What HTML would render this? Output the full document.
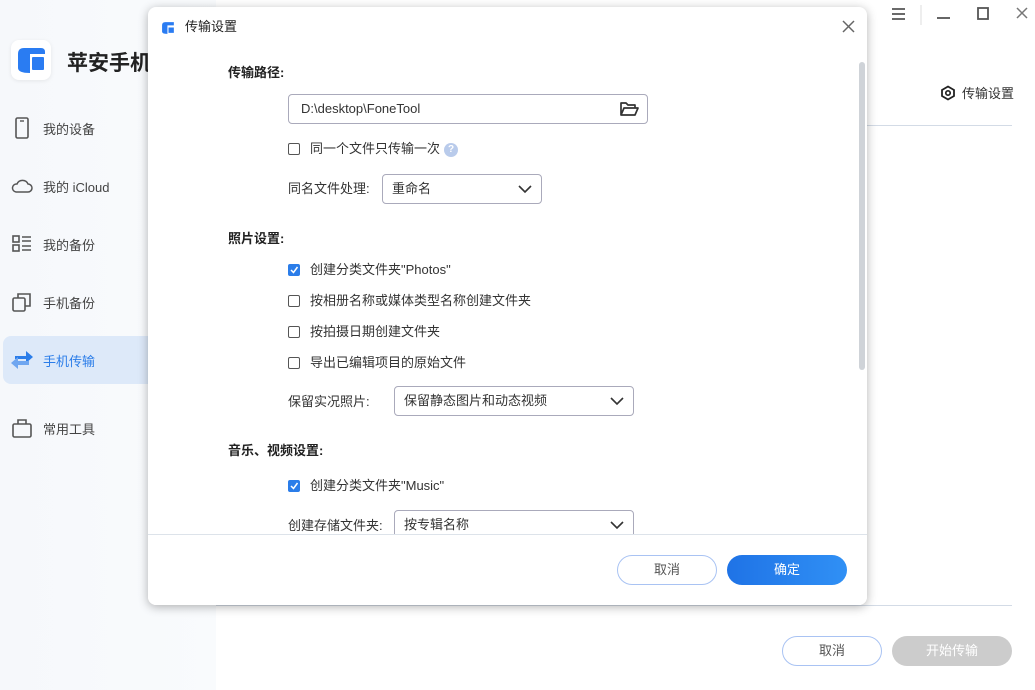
<!DOCTYPE html>
<html><head><meta charset="utf-8"><style>
*{margin:0;padding:0;box-sizing:border-box}
body{width:1035px;height:690px;overflow:hidden;background:#fff;font-family:"Liberation Sans","Noto Sans CJK SC",sans-serif;font-size:13px;color:#333;position:relative}
.abs{position:absolute}
.side{left:0;top:0;width:216px;height:690px;background:linear-gradient(90deg,#f6f8fb,#f9fbfd)}
.nav{left:0;width:216px;height:48px;display:flex;align-items:center;font-size:13px;color:#444}
.nav svg{margin-left:10px;margin-right:9px;flex-shrink:0;width:24px;height:24px}
.cb{width:12px;height:12px;border:1px solid #555;border-radius:2px;background:#fff}
.cb.on{background:#2b7de9;border-color:#2b7de9}
.sel{border:1px solid #aab;border-radius:4px;height:30px;background:#fff}
.lbl{font-weight:bold;color:#222}
.t{line-height:16px}
</style></head><body>
<div class="abs side"></div>
<div class="abs" style="left:11px;top:40px;width:40px;height:40px;background:#fff;border-radius:8px;box-shadow:0 1px 4px rgba(0,0,0,.08)">
<svg width="40" height="40"><path d="M7 28 V14 Q7 8 13 8 H30 Q34 8 34 12 V14 H19 V33 Q7 33 7 28Z" fill="#2a7cf2"/><rect x="21" y="17" width="12" height="13" rx="1" fill="#2a7cf2"/></svg></div>
<div class="abs" style="left:67px;top:47px;font-size:21px;font-weight:bold;color:#222">苹安手机</div>
<div class="abs nav" style="top:104px"><svg viewBox="0 0 24 24"><rect x="6" y="2" width="12" height="20" rx="1.5" fill="none" stroke="#555" stroke-width="1.6"/><line x1="10" y1="5" x2="14" y2="5" stroke="#555" stroke-width="1.4"/></svg>我的设备</div>
<div class="abs nav" style="top:162px"><svg viewBox="0 0 24 24"><path d="M6 18 H18 A4 4 0 0 0 18 10 A6 6 0 0 0 7 10 A4 4 0 0 0 6 18Z" fill="none" stroke="#555" stroke-width="1.5"/></svg>我的 iCloud</div>
<div class="abs nav" style="top:220px"><svg viewBox="0 0 24 24"><rect x="3" y="4" width="6" height="6" fill="none" stroke="#555" stroke-width="1.6"/><rect x="3" y="13" width="6" height="6" fill="none" stroke="#555" stroke-width="1.6"/><path d="M12 5H21M12 9H21M12 14H21M12 18H21" stroke="#555" stroke-width="1.6"/></svg>我的备份</div>
<div class="abs nav" style="top:278px"><svg viewBox="0 0 24 24"><rect x="3" y="8" width="12" height="13" rx="1.5" fill="none" stroke="#555" stroke-width="1.6"/><path d="M8 8V4H20V16H15" fill="none" stroke="#555" stroke-width="1.6"/></svg>手机备份</div>
<div class="abs" style="left:3px;top:336px;width:213px;height:48px;background:#dde9f9;border-radius:8px 0 0 8px"></div>
<div class="abs nav" style="top:336px;color:#2b7de9"><svg viewBox="0 0 24 24"><path d="M5 8H16V3L23 9L16 15V11H5Z" fill="#2b7de9"/><path d="M19 13H8V9L1 15L8 21V17H19Z" fill="#6fa6f0"/></svg>手机传输</div>
<div class="abs nav" style="top:404px"><svg viewBox="0 0 24 24"><rect x="3" y="8" width="18" height="13" rx="1.5" fill="none" stroke="#555" stroke-width="1.6"/><path d="M8 8V4H16V8" fill="none" stroke="#555" stroke-width="1.6"/></svg>常用工具</div>
<!-- top right controls -->
<svg class="abs" style="left:880px;top:0" width="155" height="30"><path d="M12 9H25M12 14H25M12 19H25" stroke="#555" stroke-width="1.8"/><line x1="41" y1="5" x2="41" y2="25" stroke="#ddd"/><line x1="57" y1="18" x2="70" y2="18" stroke="#555" stroke-width="1.8"/><rect x="98" y="8" width="10" height="11" fill="none" stroke="#555" stroke-width="1.8"/><path d="M137 8L147 18M147 8L137 18" stroke="#777" stroke-width="1.5"/></svg>
<svg class="abs" style="left:940px;top:85px" width="16" height="16" viewBox="0 0 16 16"><path d="M8 1.5L14 5V11L8 14.5L2 11V5Z" fill="none" stroke="#222" stroke-width="1.8"/><circle cx="8" cy="8" r="2.2" fill="none" stroke="#222" stroke-width="1.7"/></svg>
<div class="abs t" style="left:962px;top:86px;color:#333">传输设置</div>
<div class="abs" style="left:866px;top:125px;width:146px;height:1px;background:#d3dbe6"></div>
<div class="abs" style="left:216px;top:605px;width:796px;height:1px;background:#d3dbe6"></div>
<div class="abs" style="left:782px;top:636px;width:100px;height:30px;border:1px solid #a9c3f3;border-radius:15px;text-align:center;line-height:28px;color:#555">取消</div>
<div class="abs" style="left:892px;top:636px;width:120px;height:30px;background:#ccc;border-radius:15px;text-align:center;line-height:30px;color:#fff">开始传输</div>
<!-- dialog -->
<div class="abs" style="left:148px;top:7px;width:719px;height:598px;background:#fff;border-radius:8px;box-shadow:0 2px 10px rgba(0,0,0,.3);overflow:hidden">
<svg class="abs" style="left:13px;top:13px" width="15" height="15" viewBox="0 0 14 14"><path d="M1 11V5Q1 2 4 2H12V5H6V13Q1 13 1 11Z" fill="#2a7cf2"/><rect x="7" y="7" width="5" height="5" fill="#2a7cf2"/></svg>
<div class="abs t" style="left:37px;top:12px;color:#222">传输设置</div>
<svg class="abs" style="left:694px;top:13px" width="13" height="13"><path d="M1 1L12 12M12 1L1 12" stroke="#666" stroke-width="1.5"/></svg>
<div class="abs" style="left:711px;top:55px;width:6px;height:308px;background:#cfd3d8;border-radius:3px"></div>
<div class="abs lbl t" style="left:80px;top:58px">传输路径:</div>
<div class="abs sel" style="left:140px;top:87px;width:360px;height:30px;padding-left:12px;line-height:28px;color:#333">D:\desktop\FoneTool</div>
<svg class="abs" style="left:471px;top:94px" width="20" height="16" viewBox="0 0 20 16"><path d="M2 14V2H7L9 4H16V7M2 14L5 7H19L16 14Z" fill="none" stroke="#333" stroke-width="1.7" stroke-linejoin="round"/></svg>
<div class="abs cb" style="left:140px;top:136px"></div>
<div class="abs t" style="left:162px;top:134px">同一个文件只传输一次</div>
<div class="abs" style="left:296px;top:136px;width:14px;height:14px;border-radius:7px;background:#b9cbeb;color:#fff;font-size:10px;font-weight:bold;text-align:center;line-height:14px">?</div>
<div class="abs t" style="left:140px;top:174px">同名文件处理:</div>
<div class="abs sel" style="left:234px;top:167px;width:160px;padding-left:9px;line-height:28px">重命名</div>
<svg class="abs" style="left:370px;top:178px" width="14" height="9"><path d="M1 1L7 7L13 1" fill="none" stroke="#333" stroke-width="1.6"/></svg>
<div class="abs lbl t" style="left:80px;top:224px">照片设置:</div>
<div class="abs cb on" style="left:140px;top:257px"><svg width="10" height="10" style="position:absolute;left:0;top:0"><path d="M2 5L4.5 7.5L8.5 2" fill="none" stroke="#fff" stroke-width="1.5"/></svg></div>
<div class="abs t" style="left:162px;top:255px">创建分类文件夹"Photos"</div>
<div class="abs cb" style="left:140px;top:288px"></div>
<div class="abs t" style="left:162px;top:286px">按相册名称或媒体类型名称创建文件夹</div>
<div class="abs cb" style="left:140px;top:319px"></div>
<div class="abs t" style="left:162px;top:317px">按拍摄日期创建文件夹</div>
<div class="abs cb" style="left:140px;top:350px"></div>
<div class="abs t" style="left:162px;top:348px">导出已编辑项目的原始文件</div>
<div class="abs t" style="left:140px;top:387px">保留实况照片:</div>
<div class="abs sel" style="left:246px;top:379px;width:240px;padding-left:9px;line-height:28px">保留静态图片和动态视频</div>
<svg class="abs" style="left:462px;top:390px" width="14" height="9"><path d="M1 1L7 7L13 1" fill="none" stroke="#333" stroke-width="1.6"/></svg>
<div class="abs lbl t" style="left:80px;top:436px">音乐、视频设置:</div>
<div class="abs cb on" style="left:140px;top:473px"><svg width="10" height="10" style="position:absolute;left:0;top:0"><path d="M2 5L4.5 7.5L8.5 2" fill="none" stroke="#fff" stroke-width="1.5"/></svg></div>
<div class="abs t" style="left:162px;top:471px">创建分类文件夹"Music"</div>
<div class="abs t" style="left:140px;top:511px">创建存储文件夹:</div>
<div class="abs sel" style="left:246px;top:503px;width:240px;padding-left:9px;line-height:28px">按专辑名称</div>
<svg class="abs" style="left:462px;top:514px" width="14" height="9"><path d="M1 1L7 7L13 1" fill="none" stroke="#333" stroke-width="1.6"/></svg>
<div class="abs" style="left:0;top:527px;width:719px;height:71px;background:#fff;border-top:1px solid #dde3ea"></div>
<div class="abs" style="left:469px;top:548px;width:100px;height:30px;border:1px solid #a9c3f3;border-radius:15px;text-align:center;line-height:28px;color:#555">取消</div>
<div class="abs" style="left:579px;top:548px;width:120px;height:30px;background:linear-gradient(90deg,#1f73e6,#3090f5);border-radius:15px;text-align:center;line-height:30px;color:#fff">确定</div>
</div>
</body></html>
